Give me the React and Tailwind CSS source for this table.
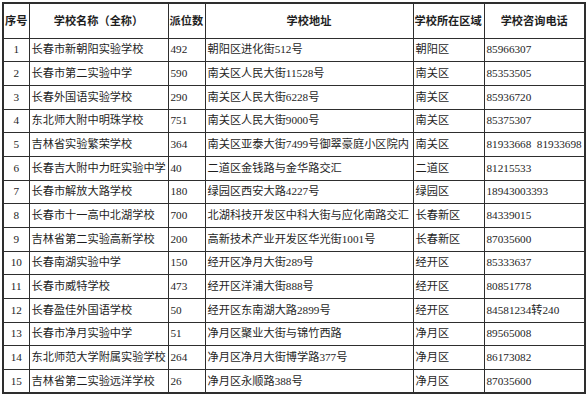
const rows = [
  ["1", "长春市新朝阳实验学校", "492", "朝阳区进化街512号", "朝阳区", "85966307"],
  ["2", "长春市第二实验中学", "590", "南关区人民大街11528号", "南关区", "85353505"],
  ["3", "长春外国语实验学校", "290", "南关区人民大街6228号", "南关区", "85936720"],
  ["4", "东北师大附中明珠学校", "751", "南关区人民大街9000号", "南关区", "85375307"],
  ["5", "吉林省实验繁荣学校", "364", "南关区亚泰大街7499号御翠豪庭小区院内", "南关区", "81933668  81933698"],
  ["6", "长春吉大附中力旺实验中学", "40", "二道区金钱路与金华路交汇", "二道区", "81215533"],
  ["7", "长春市解放大路学校", "180", "绿园区西安大路4227号", "绿园区", "18943003393"],
  ["8", "长春市十一高中北湖学校", "700", "北湖科技开发区中科大街与应化南路交汇", "长春新区", "84339015"],
  ["9", "吉林省第二实验高新学校", "200", "高新技术产业开发区华光街1001号", "长春新区", "87035600"],
  ["10", "长春南湖实验中学", "150", "经开区净月大街289号", "经开区", "85333637"],
  ["11", "长春市威特学校", "473", "经开区洋浦大街888号", "经开区", "80851778"],
  ["12", "长春盈佳外国语学校", "50", "经开区东南湖大路2899号", "经开区", "84581234转240"],
  ["13", "长春市净月实验中学", "51", "净月区聚业大街与锦竹西路", "净月区", "89565008"],
  ["14", "东北师范大学附属实验学校", "264", "净月区净月大街博学路377号", "净月区", "86173082"],
  ["15", "吉林省第二实验远洋学校", "26", "净月区永顺路388号", "净月区", "87035600"],
];

const headers = ["序号", "学校名称（全称）", "派位数", "学校地址", "学校所在区域", "学校咨询电话"];

export default function App() {
  return (
    <div className="w-[587px] h-[400px] bg-white pt-[2px] pl-[2px]">
      <table
        className="w-[582px] table-fixed border-collapse border-2 border-[#2e2e2e] text-[11.2px] leading-none text-[#1e1e1e]"
        style={{ fontFamily: '"Liberation Serif", "Noto Sans CJK SC", serif' }}
      >
        <colgroup>
          <col className="w-[26px]" />
          <col className="w-[139px]" />
          <col className="w-[37px]" />
          <col className="w-[208px]" />
          <col className="w-[71px]" />
          <col className="w-[101px]" />
        </colgroup>
        <thead>
          <tr className="h-[35px]">
            {headers.map((h, i) => (
              <th
                key={i}
                className={`border border-[#2e2e2e] font-semibold whitespace-nowrap overflow-visible p-0 ${
                  i === 0 || i === 2 || i === 4 ? "text-left pl-px" : "text-center"
                }`}
                style={{ fontFamily: '"Noto Sans CJK SC", sans-serif' }}
              >
                {h}
              </th>
            ))}
          </tr>
        </thead>
        <tbody>
          {rows.map((r) => (
            <tr key={r[0]} className="h-[23.7px]">
              {r.map((c, i) => (
                <td
                  key={i}
                  className={`border border-[#2e2e2e] p-0 whitespace-pre overflow-visible ${
                    i === 0 ? "text-center" : "text-left pl-[2px]"
                  }`}
                >
                  {c}
                </td>
              ))}
            </tr>
          ))}
        </tbody>
      </table>
    </div>
  );
}
